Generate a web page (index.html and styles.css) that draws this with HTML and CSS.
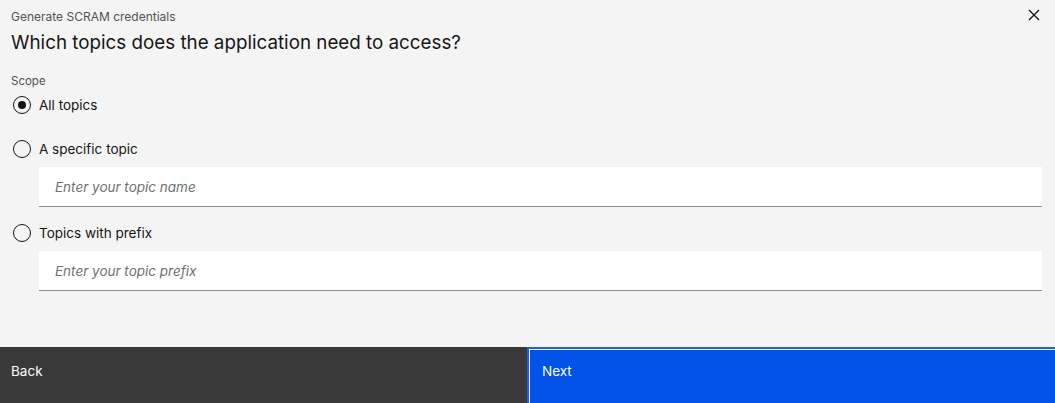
FILE: index.html
```html
<!DOCTYPE html>
<html>
<head>
<meta charset="utf-8">
<link rel="stylesheet" href="styles.css">
</head>
<body>
<div class="modal">
  <header class="header">
    <div class="header-text">
      <p class="label">Generate SCRAM credentials</p>
      <h2 class="title">Which topics does the application need to access?</h2>
    </div>
    <button class="close" aria-label="Close">
      <svg width="12" height="12" viewBox="0 0 12 12"><path d="M1 1L11 11M11 1L1 11" stroke="#161616" stroke-width="1.4" fill="none"/></svg>
    </button>
  </header>
  <main class="body">
    <fieldset class="group">
      <legend class="legend">Scope</legend>
      <label class="radio first"><span class="dot checked"></span><span>All topics</span></label>
      <label class="radio second"><span class="dot"></span><span>A specific topic</span></label>
      <div class="field"><input class="input" type="text" placeholder="Enter your topic name"></div>
      <label class="radio third"><span class="dot"></span><span>Topics with prefix</span></label>
      <div class="field"><input class="input" type="text" placeholder="Enter your topic prefix"></div>
    </fieldset>
  </main>
  <footer class="footer">
    <button class="btn btn-secondary">Back</button>
    <button class="btn btn-primary">Next</button>
  </footer>
</div>
</body>
</html>
```

FILE: styles.css
```css
* { box-sizing: border-box; }
html, body { margin: 0; padding: 0; }
body {
  width: 1055px;
  height: 403px;
  overflow: hidden;
  background: #f4f4f4;
  font-family: "Inter", "Roboto", "Liberation Sans", sans-serif;
  color: #161616;
}
.modal {
  display: flex;
  flex-direction: column;
  height: 411px;
}
.header {
  display: flex;
  justify-content: space-between;
  align-items: flex-start;
  padding: 10px 0 0 11px;
}
.label {
  margin: 0;
  font-size: 12px;
  line-height: 14px;
  color: #525252;
}
.title {
  margin: 7px 0 0;
  font-size: 18.8px;
  font-weight: 400;
  line-height: 24px;
  color: #161616;
}
.close {
  border: 0;
  background: transparent;
  width: 40px;
  height: 30px;
  padding: 0;
  margin: -10px 1px 0 0;
  display: flex;
  align-items: center;
  justify-content: center;
}
.body {
  flex: 1;
  padding: 0 13px 0 13px;
}
.group {
  border: 0;
  margin: 0;
  padding: 0;
  display: flex;
  flex-direction: column;
}
.legend {
  padding: 0;
  margin: 19px 0 8px -2px;
  font-size: 11.5px;
  line-height: 14px;
  color: #525252;
  float: left;
}
.radio {
  display: flex;
  align-items: center;
  gap: 8px;
  font-size: 13.5px;
  line-height: 18px;
  height: 18px;
  color: #161616;
}
.second { margin-top: 26px; }
.third { margin-top: 17px; }
.dot {
  width: 18px;
  height: 18px;
  border: 1.5px solid #161616;
  border-radius: 50%;
  flex: none;
  position: relative;
}
.dot.checked::after {
  content: "";
  position: absolute;
  left: 50%;
  top: 50%;
  width: 8px;
  height: 8px;
  margin: -4px 0 0 -4px;
  border-radius: 50%;
  background: #161616;
}
.field {
  margin: 9px 0 0 26px;
}
.input {
  display: block;
  width: 1003px;
  height: 40px;
  border: 0;
  border-bottom: 1px solid #8d8d8d;
  background: #ffffff;
  padding: 0 16px;
  font-family: inherit;
  font-size: 13.5px;
  color: #161616;
  outline: none;
}
.input::placeholder {
  font-style: italic;
  color: #6f6f6f;
}
.footer {
  display: flex;
  height: 64px;
  flex: none;
  width: 1060px;
}
.btn {
  border: 0;
  text-align: left;
  font-family: inherit;
  font-size: 13.5px;
  line-height: 18px;
  display: flex;
  align-items: flex-start;
  color: #ffffff;
}
.btn-secondary {
  width: 527px;
  background: #393939;
  padding: 15px 11px;
}
.btn-primary {
  flex: 1;
  background: #0353e9;
  border: 1px solid #0f62fe;
  box-shadow: inset 0 0 0 1px #0f62fe, inset 0 0 0 2px #ffffff;
  padding: 14px 14px;
}
```
